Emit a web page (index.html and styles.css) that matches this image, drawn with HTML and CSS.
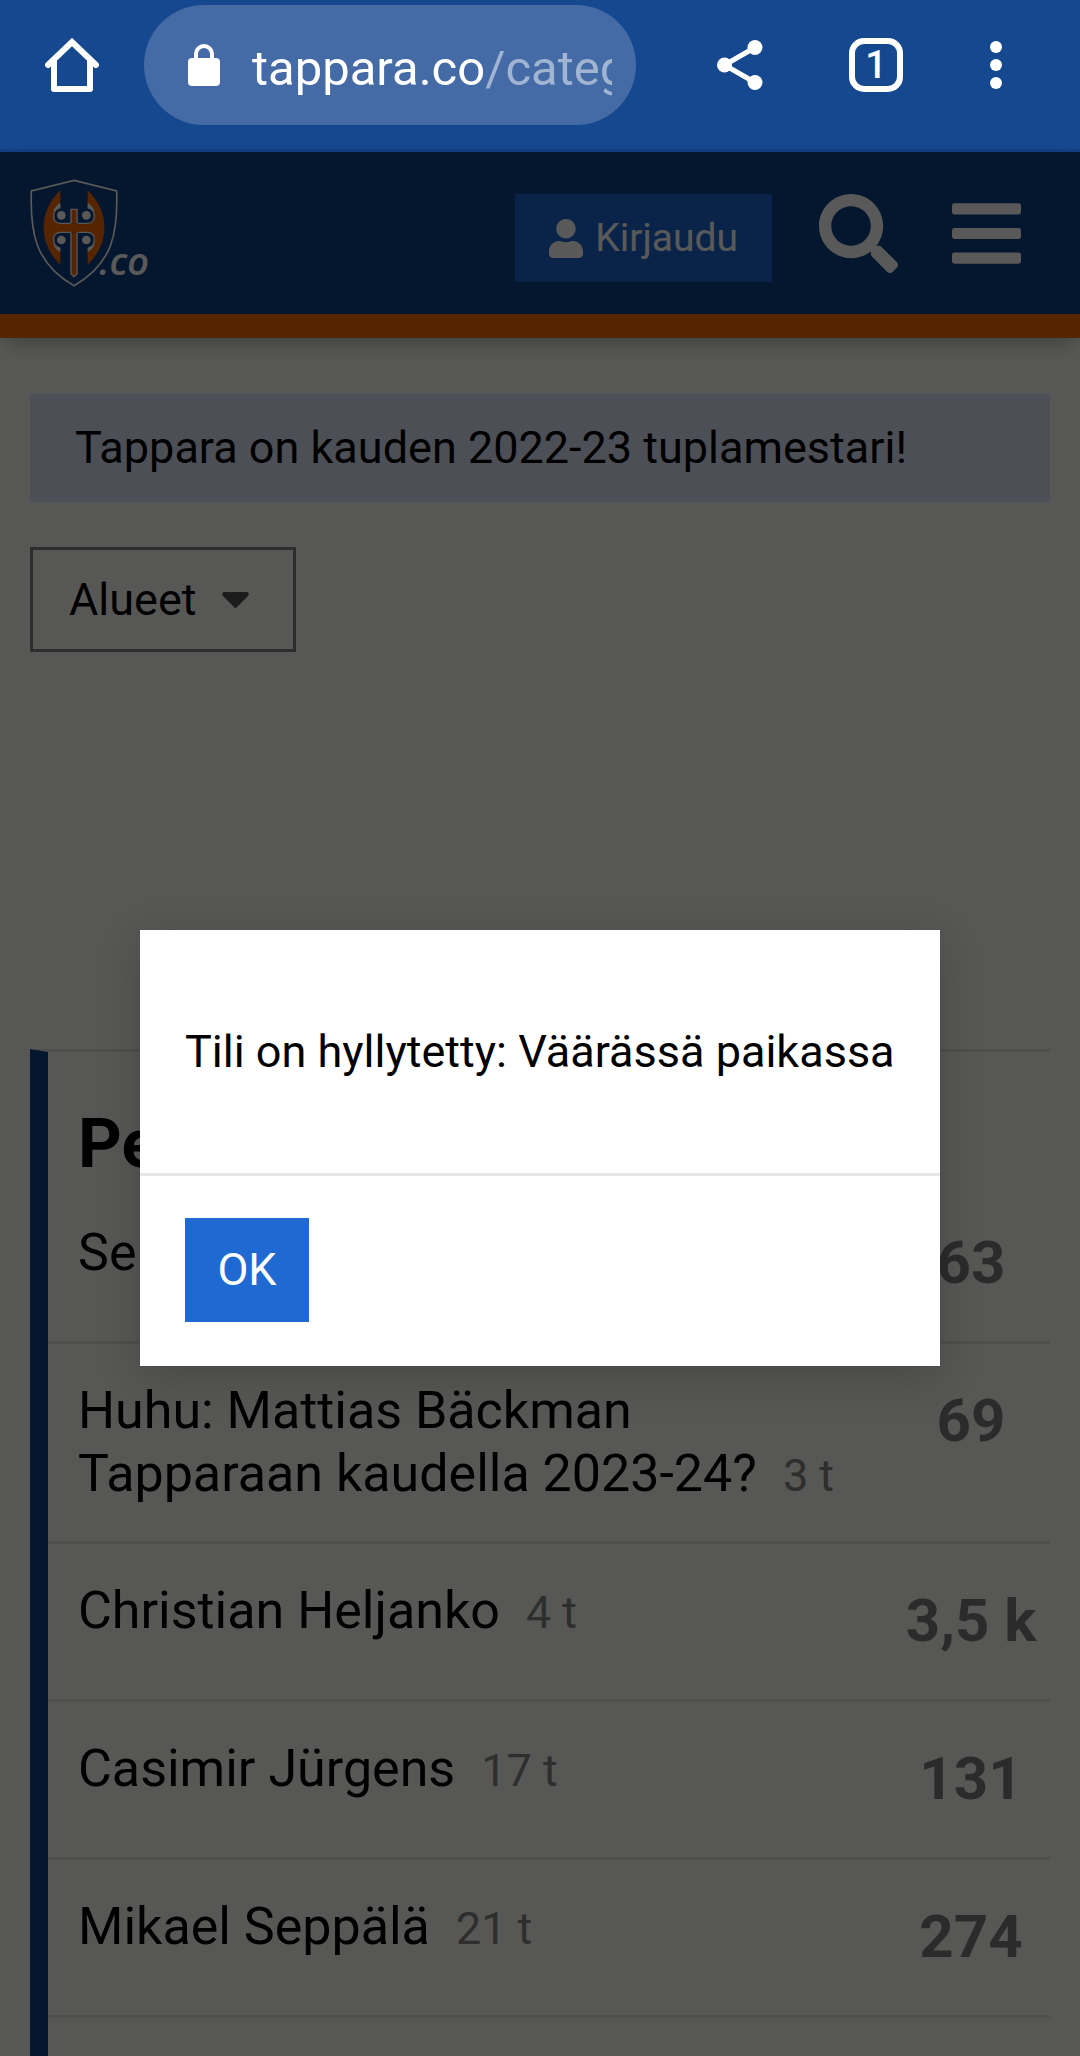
FILE: index.html
```html
<!DOCTYPE html>
<html lang="fi">
<head>
<meta charset="utf-8">
<meta name="viewport" content="width=device-width, initial-scale=1">
<title>Tappara.co</title>
<link rel="stylesheet" href="styles.css">
</head>
<body>
<div class="toolbar">
  <button class="tool home" aria-label="Aloitussivu">
    <svg width="54" height="54" viewBox="0 0 54 54" fill="none" stroke="currentColor" stroke-width="6" stroke-linecap="round" stroke-linejoin="round"><path d="M3 27 27 4 51 27" stroke-linejoin="miter"/><path d="M9 22V51H45V22" stroke-linecap="butt"/></svg>
  </button>
  <button class="address" aria-label="Osoite">
    <svg class="lock" width="32" height="42" viewBox="0 0 32 42"><rect y="14" width="32" height="28" rx="4" fill="currentColor"/><path d="M8 16V10a8 8 0 0 1 16 0v6" fill="none" stroke="currentColor" stroke-width="4"/></svg>
    <span class="url">tappara.co<span class="path">/categ</span></span>
  </button>
  <button class="tool" aria-label="Jaa">
    <svg width="46" height="50" viewBox="0 0 46 50" fill="currentColor"><path d="M38 7.500 7.500 25 38 42.500" fill="none" stroke="currentColor" stroke-width="5"/><circle cx="7.500" cy="25" r="7.500"/><circle cx="38" cy="7.500" r="7.500"/><circle cx="38" cy="42.500" r="7.500"/></svg>
  </button>
  <button class="tool" aria-label="Välilehdet"><span class="tab-count">1</span></button>
  <button class="tool more" aria-label="Valikko">
    <svg width="12" height="48" viewBox="0 0 12 48" fill="currentColor"><circle cx="6" cy="6" r="6"/><circle cx="6" cy="24" r="6"/><circle cx="6" cy="42" r="6"/></svg>
  </button>
</div>

<div class="page">
  <header class="site-header">
    <a class="logo" href="#" aria-label="Tappara.co">
      <svg width="124" height="108" viewBox="90 117 372 324">
        <path d="M222 121 350 153C354 275 340 370 222 437C104 370 90 275 94 153Z" fill="none" stroke="#fff" stroke-width="5"/>
        <g fill="#f96700">
          <path d="M181 151V374C114 308 114 216 181 151Z"/>
          <path d="M263 151V374C330 308 330 216 263 151Z"/>
          <path d="M178 250H266V276H178Z"/>
        </g>
        <g fill="#fff">
          <path d="M181 188Q165 198 160 214L181 206Z"/>
          <path d="M263 188Q279 198 284 214L263 206Z"/>
          <path d="M181 336Q165 328 160 312L181 320Z"/>
          <path d="M263 336Q279 328 284 312L263 320Z"/>
        </g>
        <g fill="#114286">
          <path d="M181 203C154 209 154 250 181 250H211V203Z"/>
          <path d="M263 203C290 209 290 250 263 250H233V203Z"/>
          <path d="M181 325C154 319 154 277 181 277H211V325Z"/>
          <path d="M263 325C290 319 290 277 263 277H233V325Z"/>
        </g>
        <g fill="none" stroke="#fff" stroke-width="4">
          <path d="M181 203C154 209 154 250 181 250H211"/>
          <path d="M263 203C290 209 290 250 263 250H233"/>
          <path d="M181 325C154 319 154 277 181 277H211"/>
          <path d="M263 325C290 319 290 277 263 277H233"/>
        </g>
        <g fill="#fff"><circle cx="184" cy="226" r="13"/><circle cx="259" cy="226" r="13"/><circle cx="184" cy="300" r="13"/><circle cx="259" cy="300" r="13"/></g>
        <path d="M213 250V208H231V250M213 277V402L222 410 231 402V277" fill="#f96700" stroke="#fff" stroke-width="4"/>
        <text class="logo-text" x="298" y="406">.co</text>
      </svg>
    </a>
    <div class="actions">
      <button class="login">
        <svg width="34" height="39" viewBox="0 0 448 512" fill="currentColor"><path d="M224 256c70.700 0 128-57.300 128-128S294.700 0 224 0 96 57.300 96 128s57.300 128 128 128zm89.600 32h-16.700c-22.200 10.200-46.900 16-72.900 16s-50.600-5.800-72.900-16h-16.700C60.200 288 0 348.200 0 422.400V464c0 26.500 21.500 48 48 48h352c26.500 0 48-21.500 48-48v-41.600c0-74.200-60.200-134.400-134.400-134.400z"/></svg>
        Kirjaudu
      </button>
      <button class="icon-button" aria-label="Haku">
        <svg width="79" height="79" viewBox="0 0 512 512" fill="currentColor"><path d="M505 442.700L405.300 343c-4.500-4.500-10.600-7-17-7H372c27.600-35.300 44-79.700 44-128C416 93.100 322.900 0 208 0S0 93.100 0 208s93.100 208 208 208c48.300 0 92.700-16.400 128-44v16.300c0 6.400 2.500 12.500 7 17l99.700 99.700c9.400 9.400 24.600 9.400 33.900 0l28.300-28.300c9.400-9.400 9.400-24.600.1-34zM208 336c-70.700 0-128-57.200-128-128 0-70.700 57.200-128 128-128 70.700 0 128 57.200 128 128 0 70.700-57.200 128-128 128z"/></svg>
      </button>
      <button class="icon-button" aria-label="Päävalikko">
        <svg width="69" height="79" viewBox="0 0 448 512" fill="currentColor"><rect y="60" width="448" height="72" rx="16"/><rect y="220" width="448" height="72" rx="16"/><rect y="380" width="448" height="72" rx="16"/></svg>
      </button>
    </div>
  </header>

  <main class="content">
    <p class="notice">Tappara on kauden 2022-23 tuplamestari!</p>
    <button class="filter">Alueet
      <svg width="27" height="16" viewBox="0 0 27 16" fill="currentColor"><path d="M2 0H25Q28 1 26 4L15 15Q13 17 12 15L1 4Q-1 1 2 0Z"/></svg>
    </button>
    <section class="category">
      <h2 class="category-title">Pe</h2>
      <ul class="topics">
        <li class="topic"><div class="topic-main"><a href="#">Ser</a></div><span class="count">63</span></li>
        <li class="topic"><div class="topic-main"><a href="#">Huhu: Mattias Bäckman Tapparaan kaudella 2023-24?</a><span class="age">3 t</span></div><span class="count">69</span></li>
        <li class="topic"><div class="topic-main"><a href="#">Christian Heljanko</a><span class="age">4 t</span></div><span class="count">3,5 k</span></li>
        <li class="topic"><div class="topic-main"><a href="#">Casimir Jürgens</a><span class="age">17 t</span></div><span class="count">131</span></li>
        <li class="topic"><div class="topic-main"><a href="#">Mikael Seppälä</a><span class="age">21 t</span></div><span class="count">274</span></li>
      </ul>
    </section>
  </main>

  <div class="backdrop">
    <div class="modal" role="alertdialog" aria-modal="true" aria-labelledby="modal-text">
      <p class="modal-body" id="modal-text">Tili on hyllytetty: Väärässä paikassa</p>
      <div class="modal-footer"><button class="ok">OK</button></div>
    </div>
  </div>
</div>
</body>
</html>
```
FILE: styles.css
```css
* { box-sizing: border-box; }

body {
  margin: 0;
  min-height: 100vh;
  display: flex;
  flex-direction: column;
  font-family: Roboto, "Liberation Sans", sans-serif;
  font-size: 45px;
  line-height: 64px;
  color: #000;
}

button {
  margin: 0;
  padding: 0;
  border: 0;
  background: none;
  color: inherit;
  font: inherit;
}

svg { display: block; flex: none; }
a { color: inherit; text-decoration: none; }
p, h2, ul { margin: 0; padding: 0; }

/* Browser toolbar */
.toolbar {
  display: flex;
  padding: 5px 32px 24px 0;
  border-bottom: 3px solid #143f80;
  background: #15488f;
  color: #fff;
}

.tool {
  width: 136px;
  display: flex;
  align-items: center;
  justify-content: center;
}
.home { width: 144px; }
.more { width: 104px; }

.address {
  flex: 1;
  min-width: 0;
  height: 120px;
  margin-right: 36px;
  padding: 0 24px 0 44px;
  display: flex;
  align-items: center;
  gap: 32px;
  border-radius: 60px;
  background: #446ba5;
}

.url {
  flex: 1;
  min-width: 0;
  padding-top: 8px;
  overflow: hidden;
  white-space: nowrap;
  text-align: left;
  font-size: 49px;
}
.path { color: #a1b5d2; }

.tab-count {
  width: 54px;
  height: 54px;
  border: 6px solid #fff;
  border-radius: 15px;
  font-size: 38px;
  font-weight: 500;
  line-height: 42px;
  text-align: center;
}

/* Site */
.page {
  flex: 1;
  display: flex;
  flex-direction: column;
  position: relative;
  background: #f9f9f5;
}

.site-header {
  display: flex;
  align-items: center;
  justify-content: space-between;
  padding: 27px 30px;
  border-bottom: 24px solid #f96700;
  background: #114286;
  color: #fff;
  box-shadow: 0 10px 20px -6px rgba(0, 0, 0, 0.3);
}

.logo-text {
  fill: #fff;
  font: italic 600 114px "Open Sans", sans-serif;
}

.actions {
  display: flex;
  align-items: flex-end;
  height: 98px;
}

.login {
  display: flex;
  align-items: center;
  gap: 12px;
  height: 88px;
  margin-right: 22px;
  padding: 0 34px;
  background: #1f69d2;
  font-size: 39px;
}

.icon-button {
  width: 128px;
  height: 98px;
  display: flex;
  align-items: center;
  justify-content: center;
}

.content {
  flex: 1;
  display: flex;
  flex-direction: column;
  align-items: flex-start;
  padding: 56px 30px 0;
}

.notice {
  align-self: stretch;
  padding: 22px 45px;
  background: #dce2f8;
}

.filter {
  display: flex;
  align-items: center;
  gap: 25px;
  height: 105px;
  margin-top: 45px;
  padding: 0 44px 0 36px;
  border: 3px solid #818181;
}
.filter svg { color: #505050; }

.category {
  flex: 1;
  align-self: stretch;
  margin-top: 397px;
  padding-top: 51px;
  border-top: 3px solid #e2e2e0;
  border-left: 18px solid #114286;
}

.category-title {
  padding-left: 30px;
  font-size: 68px;
  line-height: 83px;
}

.topics { list-style: none; }

.topic {
  display: flex;
  padding: 35px 0 36px 30px;
  border-bottom: 3px solid #e2e2e0;
}

.topic-main {
  flex: 1;
  padding-right: 36px;
  font-size: 52px;
  line-height: 63px;
}

.age {
  margin-left: 26px;
  color: #858585;
  font-size: 45px;
  line-height: 45px;
  white-space: nowrap;
}

.count {
  width: 158px;
  color: #7d7d7d;
  font-size: 60px;
  font-weight: 700;
  line-height: 84px;
  text-align: center;
}

/* Dialog */
.backdrop {
  position: absolute;
  inset: 0;
  display: flex;
  align-items: center;
  justify-content: center;
  padding: 88px 30px 0;
  background: rgba(0, 0, 0, 0.65);
}

.modal {
  width: 800px;
  max-width: 100%;
  background: #fff;
  box-shadow: 0 12px 42px rgba(0, 0, 0, 0.18);
}

.modal-body {
  padding: 90px 45px 89px;
  border-bottom: 3px solid #e6e6e6;
}

.modal-footer { padding: 42px 45px 44px; }

.ok {
  display: block;
  width: 124px;
  height: 104px;
  background: #1f69d2;
  color: #fff;
}
```
